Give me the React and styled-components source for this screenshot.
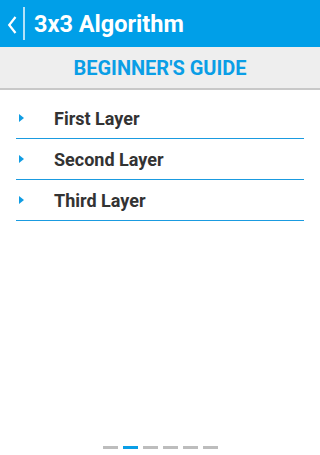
import React from 'react'
import styled, { createGlobalStyle } from 'styled-components'

const Global = createGlobalStyle`
  html, body { margin: 0; padding: 0; background: #fff; }
  body { font-family: Roboto, "Liberation Sans", sans-serif; }
  #root { height: 455px; }
`

const Page = styled.div`
  width: 320px;
  height: 455px;
  display: flex;
  flex-direction: column;
  background: #fff;
  overflow: hidden;
`

const TopBar = styled.div`
  height: 47px;
  background: #009fe8;
  display: flex;
  align-items: center;
  color: #fff;
`

const Back = styled.div`
  width: 22px;
  display: flex;
  justify-content: center;
  padding: 3px 0 0 1px;
  svg { display: block; }
`

const Divider = styled.div`
  width: 2px;
  height: 33px;
  background: rgba(255,255,255,0.7);
`

const Title = styled.h1`
  margin: 0 0 0 9px;
  font-size: 23.5px;
  font-weight: 700;
`

const SubBar = styled.div`
  height: 41px;
  background: #eeeeee;
  border-bottom: 2px solid #c8c8c8;
  display: flex;
  align-items: center;
  justify-content: center;
  color: #0a9ee6;
  font-size: 20px;
  font-weight: 700;
`

const List = styled.div`
  padding: 8px 16px 0;
`

const Row = styled.div`
  height: 40px;
  border-bottom: 1px solid #1a9be0;
  display: flex;
  align-items: center;
  font-size: 18px;
  font-weight: 700;
  color: #333;
`

const Bullet = styled.span`
  width: 0;
  height: 0;
  margin: 0 30px 0 3px;
  border-top: 4px solid transparent;
  border-bottom: 4px solid transparent;
  border-left: 5px solid #109de3;
`

const Dots = styled.div`
  margin-top: auto;
  padding-bottom: 6px;
  display: flex;
  justify-content: center;
  gap: 5px;
`

const Dash = styled.span`
  width: 15px;
  height: 3px;
  background: ${({active}) => active ? '#0a9ee6' : '#bdbdbd'};
`

const rows = ['First Layer', 'Second Layer', 'Third Layer']

export default function App() {
  return (
    <Page>
      <Global />
      <TopBar>
        <Back>
          <svg width="10" height="20" viewBox="0 0 10 20">
            <path d="M8.5 2 L2.2 10 L8.5 18" fill="none" stroke="#fff" strokeWidth="2.2" />
          </svg>
        </Back>
        <Divider />
        <Title>3x3 Algorithm</Title>
      </TopBar>
      <SubBar>BEGINNER'S GUIDE</SubBar>
      <List>
        {rows.map(r => (
          <Row key={r}>
            <Bullet />
            {r}
          </Row>
        ))}
      </List>
      <Dots>
        {[0,1,2,3,4,5].map(i => <Dash key={i} active={i === 1} />)}
      </Dots>
    </Page>
  )
}
